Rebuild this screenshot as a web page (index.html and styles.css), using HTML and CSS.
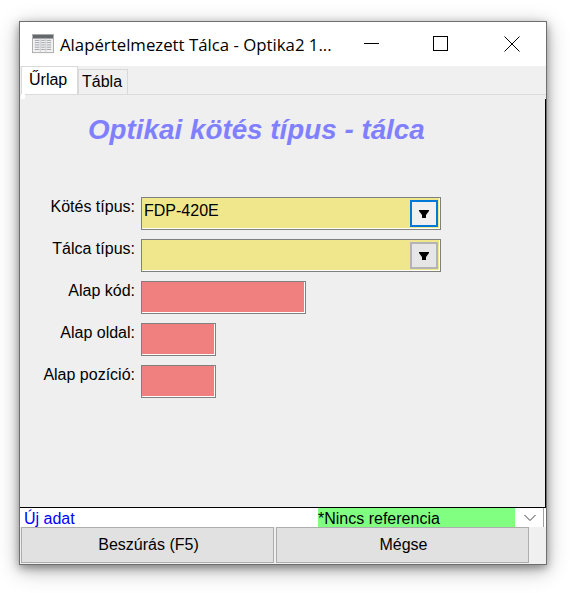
FILE: index.html
```html
<!DOCTYPE html>
<html lang="hu">
<head>
  <meta charset="UTF-8">
  <title>Alapértelmezett Tálca</title>
  <link rel="stylesheet" href="styles.css">
</head>
<body>
  <div class="window">
    <div class="titlebar">
      <svg class="app-icon" width="22" height="20" viewBox="0 0 24 22">
        <rect x="0.5" y="0.5" width="23" height="20" fill="#f2f2f2" stroke="#a8a8a8"/>
        <rect x="1" y="1" width="22" height="4" fill="#64686d"/>
        <path d="M3 7h5M3 9.500h5M3 12h5M3 14.500h5M3 17h5M10 7h4M10 9.500h4M10 12h4M10 14.500h4M10 17h4M16 7h5M16 9.500h5M16 12h5M16 14.500h5M16 17h5" stroke="#989da3" fill="none"/>
        <path d="M9 5v15M15 5v15" stroke="#c8c8c8" fill="none"/>
      </svg>
      <span class="title-text">Alapértelmezett Tálca - Optika2 1...</span>
      <div class="win-btn">
        <svg width="16" height="16" viewBox="0 0 16 16"><path d="M0 7.500h15" stroke="#000" fill="none"/></svg>
      </div>
      <div class="win-btn max">
        <svg width="16" height="16" viewBox="0 0 16 16"><rect x="0.500" y="0.500" width="14" height="14" stroke="#000" fill="none"/></svg>
      </div>
      <div class="win-btn">
        <svg width="16" height="16" viewBox="0 0 16 16"><path d="M0.500 0.500l15 15M15.500 0.500l-15 15" stroke="#000" fill="none"/></svg>
      </div>
    </div>

    <div class="tabs">
      <div class="tab active">Űrlap</div>
      <div class="tab">Tábla</div>
    </div>

    <div class="panel">
      <h1 class="heading">Optikai kötés típus - tálca</h1>
      <div class="form">
        <label>Kötés típus:</label>
        <div class="field combo">
          <span>FDP-420E</span>
          <div class="drop focused"><svg width="12" height="10" viewBox="0 0 12 10"><path d="M1 1h10v1L8 6v3H4V6L1 2z" fill="#000"/></svg></div>
        </div>
        <label>Tálca típus:</label>
        <div class="field combo">
          <span></span>
          <div class="drop"><svg width="12" height="10" viewBox="0 0 12 10"><path d="M1 1h10v1L8 6v3H4V6L1 2z" fill="#000"/></svg></div>
        </div>
        <label>Alap kód:</label>
        <div class="field required medium"></div>
        <label>Alap oldal:</label>
        <div class="field required small"></div>
        <label>Alap pozíció:</label>
        <div class="field required small"></div>
      </div>
    </div>

    <div class="status">
      <span class="status-left">Új adat</span>
      <span class="status-ref">*Nincs referencia</span>
      <div class="status-arrow">
        <svg width="12" height="8" viewBox="0 0 12 8"><path d="M0.500 1l5.500 5.500L11.500 1" stroke="#404040" fill="none"/></svg>
      </div>
    </div>

    <div class="actions">
      <button>Beszúrás (F5)</button>
      <button>Mégse</button>
    </div>
  </div>
</body>
</html>
```

FILE: styles.css
```css
html {
  height: 100%;
  background-color: #fff;
}
body {
  box-sizing: border-box;
  min-height: 100%;
  margin: 0;
  padding: 21px 0 0 19px;
  font-family: "Liberation Sans", Arial, sans-serif;
  font-size: 16px;
  color: #000;
}
.window {
  box-sizing: border-box;
  width: 528px;
  height: 544px;
  display: flex;
  flex-direction: column;
  background-color: #f0f0f0;
  border: 1px solid #6e6e6e;
  box-shadow: 0 3px 8px rgba(0, 0, 0, 0.35), 0 5px 20px rgba(0, 0, 0, 0.3);
}
.titlebar {
  height: 44px;
  flex: none;
  display: flex;
  align-items: center;
  background-color: #fff;
}
.app-icon {
  margin-left: 12px;
  margin-right: 6px;
}
.title-text {
  flex: 1;
  font-family: "Open Sans", sans-serif;
  font-size: 16.800px;
  white-space: nowrap;
}
.win-btn {
  box-sizing: border-box;
  width: 70px;
  padding-left: 2px;
  display: flex;
  justify-content: center;
}
.win-btn.max {
  padding-left: 0;
}
.tabs {
  height: 28px;
  flex: none;
  display: flex;
  align-items: flex-end;
  padding-left: 1px;
}
.tab {
  box-sizing: border-box;
  height: 25px;
  width: 50px;
  padding-left: 3px;
  line-height: 24px;
  border: 1px solid #d9d9d9;
  border-bottom: none;
}
.tab.active {
  position: relative;
  height: 28px;
  width: 57px;
  padding-left: 7px;
  background-color: #fff;
  line-height: 25px;
}
.tab.active::after {
  content: "";
  position: absolute;
  left: -1px;
  top: 100%;
  width: 4px;
  height: 5px;
  background-color: #fff;
}
.panel {
  box-sizing: border-box;
  height: 414px;
  flex: none;
  padding-top: 19px;
  border-top: 1px solid #dcdcdc;
  border-bottom: 1px solid #000;
  background: linear-gradient(#000, #000) right top 4px / 1px 100% no-repeat #efefef;
}
.heading {
  margin: 0 0 51px 68px;
  font-size: 27.800px;
  font-style: italic;
  font-weight: bold;
  line-height: 32px;
  color: #8080ff;
}
.form {
  display: grid;
  grid-template-columns: 115px 1fr;
  gap: 9px 6px;
  grid-auto-rows: 33px;
}
.form label {
  padding-top: 1px;
  text-align: right;
  line-height: 18px;
}
.field {
  box-sizing: border-box;
  border: 1px solid #808080;
  box-shadow: inset -1px -1px 0 #fff;
}
.combo {
  width: 300px;
  display: flex;
  align-items: center;
  justify-content: space-between;
  padding: 0 2px;
  background-color: #f0e68c;
}
.combo span {
  margin-bottom: 6px;
}
.required {
  background-color: #f08080;
}
.medium {
  width: 165px;
}
.small {
  width: 75px;
}
.drop {
  box-sizing: border-box;
  width: 28px;
  height: 27px;
  display: flex;
  align-items: center;
  justify-content: center;
  background-color: #e6e6e6;
  border: 2px solid #b4b4b4;
}
.drop.focused {
  background-color: #f0f0f0;
  border: 2px solid #0078d7;
}
.status {
  height: 19px;
  flex: none;
  display: flex;
  background-color: #fff;
  line-height: 21px;
  overflow: hidden;
}
.status-left {
  width: 294px;
  padding-left: 4px;
  color: #00f;
}
.status-ref {
  width: 197px;
  background-color: #80ff80;
}
.status-arrow {
  width: 26px;
  padding-left: 2px;
  border-right: 1px solid #a0a0a0;
  display: flex;
  align-items: center;
  justify-content: center;
}
.actions {
  display: flex;
  gap: 2px;
  padding-left: 1px;
}
button {
  width: 253px;
  height: 36px;
  font-family: inherit;
  font-size: 16px;
  color: #000;
  background-color: #e1e1e1;
  border: 1px solid #adadad;
  padding: 0 0 0 2px;
}
```
